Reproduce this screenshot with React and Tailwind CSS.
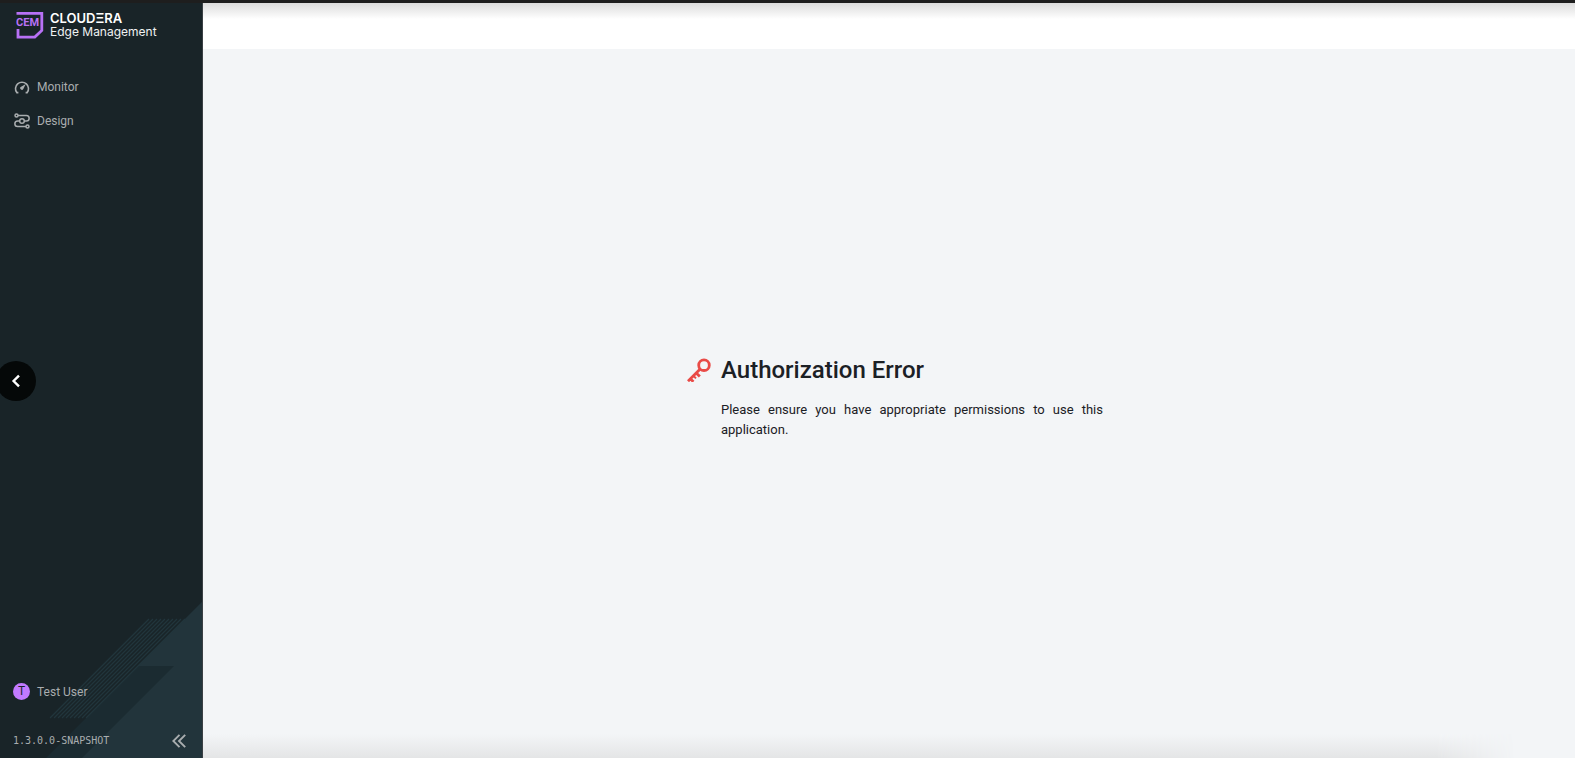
import React from "react";

const App = () => {
  return (
    <div className="relative flex h-screen w-full flex-col overflow-hidden bg-[#f3f5f7] font-['Roboto',sans-serif]">
      <div className="h-[3px] shrink-0 bg-[#1e1e1e]" />

      <div className="flex min-h-0 flex-1">
        <Sidebar />

        <div className="flex min-w-0 flex-1 flex-col">
          <header className="h-[46px] shrink-0 bg-white bg-linear-to-b from-[#dcdcdc] to-white to-[16px]" />

          <main className="relative flex flex-1 items-center justify-center pb-3 pl-3">
            <AuthorizationError />
            <div className="absolute bottom-0 left-0 right-[60px] h-6 bg-linear-to-t from-[#e4e5e6] to-[#f3f5f7] mask-r-from-[94%]" />
          </main>
        </div>
      </div>

      <button
        type="button"
        aria-label="Previous"
        className="absolute left-[-4px] top-[361px] flex h-10 w-10 items-center justify-center rounded-full bg-[#050808] text-white"
      >
        <svg width="12" height="14" viewBox="0 0 12 14" fill="none" aria-hidden="true">
          <path d="M9 1.6 3.6 7 9 12.4" stroke="currentColor" strokeWidth="2.4" />
        </svg>
      </button>
    </div>
  );
};

function Sidebar() {
  return (
    <aside className="relative flex w-[203px] shrink-0 flex-col border-r border-[#3a4044] bg-[#192428] text-xs text-[#a9adaf]">
      <SidebarPattern />

      <div className="relative flex items-center gap-[6px] pl-4 pt-2">
        <CemLogo />
        <div className="font-['Inter',sans-serif]">
          <p className="text-[13px] leading-[13px] font-semibold text-white">CLOUDΞRA</p>
          <p className="text-xs leading-[13px] text-[#f0f2f2]">Edge Management</p>
        </div>
      </div>

      <nav className="relative mt-[31px] flex flex-col pl-[14px]">
        <NavItem icon={<GaugeIcon />} label="Monitor" />
        <NavItem icon={<FlowIcon />} label="Design" />
      </nav>

      <div className="relative mt-auto flex items-center gap-[7px] pl-[13px]">
        <span className="flex h-[17px] w-[17px] items-center justify-center rounded-full bg-[#c27aff] text-xs leading-[17px] text-[#1a2428]">
          T
        </span>
        <span>Test User</span>
      </div>

      <div className="relative mt-8 flex items-center justify-between pb-2 pl-[13px] pr-4">
        <span className="font-['DejaVu_Sans_Mono',monospace] text-[10px]">
          1.3.0.0-SNAPSHOT
        </span>
        <button type="button" aria-label="Collapse sidebar">
          <svg width="14" height="18" viewBox="0 0 14 18" fill="none" aria-hidden="true">
            <path
              d="M7.5 2.8 1.3 9l6.2 6.2M13.2 2.8 7 9l6.2 6.2"
              stroke="currentColor"
              strokeWidth="1.9"
            />
          </svg>
        </button>
      </div>
    </aside>
  );
}

function NavItem({ icon, label }) {
  return (
    <a href="#" className="flex h-[34px] items-center gap-[7px]">
      {icon}
      <span>{label}</span>
    </a>
  );
}

function AuthorizationError() {
  return (
    <section className="flex w-[416px] gap-[10px] text-[#1b2025]">
      <KeyIcon />
      <div className="flex-1">
        <h1 className="text-2xl leading-7 font-medium">Authorization Error</h1>
        <p className="mt-4 text-[13px] leading-5 text-justify">
          Please ensure you have appropriate permissions to use this application.
        </p>
      </div>
    </section>
  );
}

function CemLogo() {
  return (
    <svg width="28" height="28" viewBox="0 0 28 28" className="shrink-0" role="img" aria-label="CEM">
      <path
        d="M.5 2.4h25.3v17l-7 6.7H2V18"
        fill="none"
        stroke="#b871f5"
        strokeWidth="2.8"
      />
      <text
        x="0"
        y="14.5"
        fill="#b871f5"
        fontSize="11"
        fontWeight="700"
        fontFamily="Roboto, sans-serif"
      >
        CEM
      </text>
    </svg>
  );
}

function GaugeIcon() {
  return (
    <svg width="16" height="16" viewBox="0 0 16 16" fill="none" aria-hidden="true">
      <path
        d="M4.4 13.6H2.8A6.5 6.5 0 1 1 13.2 13.6H11.6"
        stroke="currentColor"
        strokeWidth="1.6"
      />
      <path d="M11.8 5 9.3 9.9A1.6 1.6 0 1 1 7.1 7.8Z" fill="currentColor" />
    </svg>
  );
}

function FlowIcon() {
  return (
    <svg
      width="16"
      height="16"
      viewBox="0 0 16 16"
      fill="none"
      stroke="currentColor"
      strokeWidth="1.5"
      aria-hidden="true"
    >
      <circle cx="2.5" cy="2.5" r="1.5" />
      <circle cx="8" cy="8" r="2.3" />
      <circle cx="13.5" cy="13.5" r="1.5" />
      <path d="M4 2.5h8.4a2.75 2.75 0 0 1 0 5.5h-2.1" />
      <path d="M5.7 8H3.6a2.75 2.75 0 0 0 0 5.5H12" />
    </svg>
  );
}

function KeyIcon() {
  return (
    <svg
      width="24"
      height="24"
      viewBox="0 0 24 24"
      fill="none"
      stroke="#e94b47"
      strokeWidth="2.8"
      className="mt-[2px] shrink-0"
      aria-hidden="true"
    >
      <circle cx="17" cy="7.2" r="5.3" />
      <path d="M13.2 11 1 23.2M9.2 15l3.6 3.6M3.4 20.8 6.4 23.8" />
      <path d="m6.4 17.8 2.6 2.6" strokeWidth="2" />
    </svg>
  );
}

// Diagonal artwork at the foot of the sidebar
function SidebarPattern() {
  const stripes = Array.from({ length: 10 }, (_, i) => i * 4);

  return (
    <svg
      viewBox="0 0 202 158"
      className="absolute bottom-0 left-0 w-full"
      fill="none"
      aria-hidden="true"
    >
      <path d="M202 2 46 158h156Z" fill="#1b2b31" />
      <path d="M202 2 138 66h36L82 158h120Z" fill="#22343b" />
      {stripes.map((x) => (
        <path key={x} d={`M${x + 149} 19 ${x + 50} 118`} stroke="#21353c" strokeWidth="1.3" />
      ))}
    </svg>
  );
}

export default App;
